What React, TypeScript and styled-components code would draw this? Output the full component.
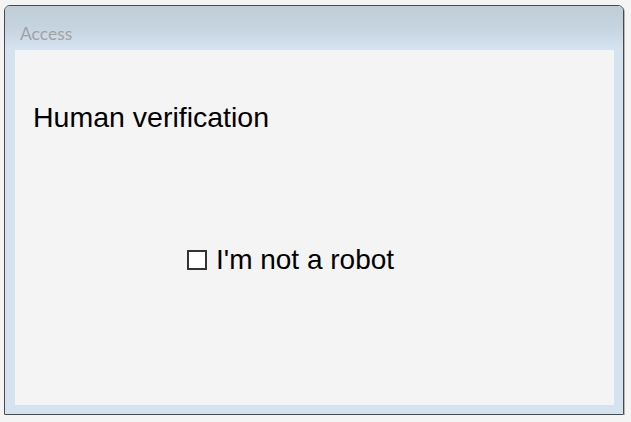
import React from "react";
import styled, { createGlobalStyle } from "styled-components";

const Global = createGlobalStyle`
  html, body { margin: 0; padding: 0; background: #f4f4f4; }
  body { font-family: "Liberation Sans", Arial, sans-serif; }
  #root { padding: 5px 0 0 4px; }
`;

const Window = styled.div`
  width: 620px;
  box-sizing: border-box;
  border: 1px solid #4a4a4a;
  border-radius: 6px 6px 1px 1px;
  box-shadow: 1px 1px 0 rgba(0, 0, 0, 0.25);
  background: #d5e3f1;
  display: flex;
  flex-direction: column;
  overflow: hidden;
`;

const TitleBar = styled.div`
  height: 44px;
  box-sizing: border-box;
  padding: 17px 0 0 15px;
  background: linear-gradient(to bottom, #bfcdd9 0%, #c6d4e0 50%, #d6e4f2 100%);
  font-family: Lato, "Open Sans", sans-serif;
  font-size: 17.5px;
  line-height: 22px;
  color: #a2a2a2;
`;

const Frame = styled.div`
  padding: 0 9px 9px 10px;
`;

const Panel = styled.div`
  height: 355px;
  box-sizing: border-box;
  background: #f4f4f4;
  padding: 51px 0 0 18px;
  display: flex;
  flex-direction: column;
`;

const Heading = styled.div`
  font-size: 28.5px;
  line-height: 32px;
  color: #000;
`;

const CheckRow = styled.label`
  margin-top: 111px;
  margin-left: 154px;
  display: flex;
  align-items: center;
  gap: 9px;
  font-size: 28px;
  line-height: 32px;
  color: #000;
`;

const Box = styled.span`
  width: 20px;
  height: 20px;
  box-sizing: border-box;
  border: 2px solid #333;
  background: #fff;
  flex: none;
`;

export default function App() {
  return (
    <>
      <Global />
      <Window>
        <TitleBar>Access</TitleBar>
        <Frame>
          <Panel>
            <Heading>Human verification</Heading>
            <CheckRow>
              <Box />
              <span>I'm not a robot</span>
            </CheckRow>
          </Panel>
        </Frame>
      </Window>
    </>
  );
}
